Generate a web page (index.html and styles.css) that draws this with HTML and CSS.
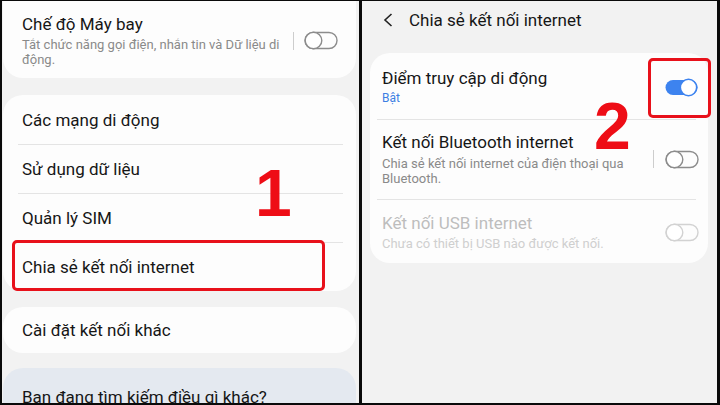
FILE: index.html
```html
<!DOCTYPE html>
<html lang="vi">
<head>
<meta charset="utf-8">
<link rel="stylesheet" href="styles.css">
</head>
<body>
<div class="screen">
  <section class="panel left">
    <div class="card first">
      <div class="row-toggle">
        <div class="texts airplane">
          <div class="title">Chế độ Máy bay</div>
          <div class="sub">Tắt chức năng gọi điện, nhắn tin và Dữ liệu di động.</div>
        </div>
        <span class="vsep"></span>
        <svg class="switch" width="34" height="19" viewBox="0 0 34 19"><rect x="1" y="1.5" width="32" height="16" rx="8" fill="none" stroke="#8c8c8c" stroke-width="1.4"/><circle cx="9.5" cy="9.5" r="8.3" fill="#fff" stroke="#8c8c8c" stroke-width="1.4"/></svg>
      </div>
    </div>

    <div class="card list">
      <div class="item">Các mạng di động</div>
      <div class="sep"></div>
      <div class="item">Sử dụng dữ liệu</div>
      <div class="sep"></div>
      <div class="item">Quản lý SIM</div>
      <div class="sep"></div>
      <div class="item">Chia sẻ kết nối internet
        <span class="mark mark1"></span>
      </div>
      <span class="num num1">1</span>
    </div>

    <div class="card single">
      <div class="item">Cài đặt kết nối khác</div>
    </div>

    <div class="card search">
      <div class="item">Bạn đang tìm kiếm điều gì khác?</div>
    </div>
  </section>

  <section class="panel right">
    <header class="head">
      <svg class="back" width="11" height="14" viewBox="0 0 11 14"><polyline points="8.5,1 2,7 8.5,13" fill="none" stroke="#222" stroke-width="1.6"/></svg>
      <span class="head-title">Chia sẻ kết nối internet</span>
    </header>

    <div class="card rcard">
      <div class="rrow r1">
        <div class="texts">
          <div class="title">Điểm truy cập di động</div>
          <div class="state">Bật</div>
        </div>
        <svg class="switch" width="34" height="19" viewBox="0 0 34 19"><rect x="0.5" y="2" width="32" height="15" rx="7.5" fill="#3d83ef"/><circle cx="23.5" cy="9.5" r="8.2" fill="#fff" stroke="#3d83ef" stroke-width="1.6"/></svg>
        <span class="mark mark2"></span>
      </div>
      <div class="sep rsep"></div>
      <div class="rrow r2">
        <div class="texts bt">
          <div class="title">Kết nối Bluetooth internet</div>
          <div class="sub">Chia sẻ kết nối internet của điện thoại qua Bluetooth.</div>
        </div>
        <span class="vsep"></span>
        <svg class="switch" width="34" height="19" viewBox="0 0 34 19"><rect x="1" y="1.5" width="32" height="16" rx="8" fill="none" stroke="#8c8c8c" stroke-width="1.4"/><circle cx="9.5" cy="9.5" r="8.3" fill="#fff" stroke="#8c8c8c" stroke-width="1.4"/></svg>
      </div>
      <div class="sep rsep"></div>
      <div class="rrow r3">
        <div class="texts">
          <div class="title dim">Kết nối USB internet</div>
          <div class="sub dim2">Chưa có thiết bị USB nào được kết nối.</div>
        </div>
        <svg class="switch" width="34" height="19" viewBox="0 0 34 19"><rect x="1" y="1.5" width="32" height="16" rx="8" fill="none" stroke="#d2d2d2" stroke-width="1.4"/><circle cx="9.5" cy="9.5" r="8.3" fill="#fff" stroke="#d2d2d2" stroke-width="1.4"/></svg>
      </div>
      <span class="num num2">2</span>
    </div>
  </section>
</div>
</body>
</html>
```

FILE: styles.css
```css
* { box-sizing: border-box; }
html, body {
  margin: 0;
  padding: 0;
  width: 720px;
  height: 405px;
  overflow: hidden;
  background: #0a0a0a;
}
body {
  font-family: Roboto, "Noto Sans", sans-serif;
  color: #141414;
}
.screen {
  display: grid;
  grid-template-columns: 357px 355px;
  column-gap: 3px;
  padding: 1px 3px 2px 2px;
  height: 405px;
}
.panel {
  background: #f2f2f2;
  overflow: hidden;
  position: relative;
  display: flex;
  flex-direction: column;
}
.left { padding: 0 3px 0 1px; }

.card {
  background: #fdfdfd;
  border-radius: 20px;
  position: relative;
}
.title {
  font-size: 17px;
  line-height: 20px;
  color: #161616;
}
.sub {
  font-size: 13px;
  line-height: 15px;
  color: #8a8a8a;
  margin-top: 3px;
}

.first {
  margin-top: -20px;
  padding: 33px 18px 11px 19px;
}
.row-toggle {
  display: flex;
  align-items: center;
}
.texts { flex: 1; min-width: 0; }
.airplane { flex: none; width: 261px; }
.vsep {
  flex: none;
  display: block;
  width: 1px;
  height: 18px;
  background: #cdcdcd;
  margin: 0 10px;
}
.switch { display: block; flex: none; }

.list {
  margin-top: 17px;
  padding-top: 1px;
}
.item {
  height: 48px;
  display: flex;
  align-items: center;
  padding-left: 19px;
  font-size: 17px;
  color: #161616;
  position: relative;
}
.sep {
  height: 1px;
  background: #e4e4e4;
  margin: 0 13px 0 15px;
}
.single {
  margin-top: 16px;
}
.single .item { height: 46px; }
.search {
  margin-top: 15px;
  background: #e4e9f0;
  flex: 1;
  padding-top: 19px;
  border-radius: 20px 20px 0 0;
}
.search .item { height: 20px; align-items: flex-start; line-height: 20px; }

.mark {
  position: absolute;
  border: 3px solid #e8111b;
  border-radius: 5px;
}
.mark1 {
  left: 9px;
  top: -3px;
  width: 313px;
  height: 51px;
}
.num {
  position: absolute;
  font-family: "Liberation Sans", Arial, sans-serif;
  font-weight: 700;
  font-size: 66px;
  line-height: 66px;
  color: #ee0d16;
}
.num1 { left: 252px; top: 65px; }

/* right */
.right { padding: 9px 9px 0 8px; }
.head {
  display: flex;
  align-items: center;
  height: 20px;
  padding-left: 13px;
}
.back { display: block; margin-right: 15px; }
.head-title { font-size: 17px; line-height: 20px; color: #161616; }

.rcard {
  margin-top: 23px;
  padding: 0 9px 0 12px;
}
.rrow {
  display: flex;
  align-items: center;
  position: relative;
}
.r1 { padding: 15px 0 13px; }
.r2 { padding: 12px 0 13px; }
.r3 { padding: 13px 0 12px; }
.state {
  font-size: 12px;
  line-height: 15px;
  color: #3c7fe3;
  margin-top: 3px;
}
.bt { flex: none; width: 259px; }
.r2 .vsep { margin: 0 11px 0 12px; }
.r2 .sub { margin-top: 4px; }
.r3 .sub { margin-top: 3px; }
.rsep { margin: 0 3px 0 -5px; }
.dim { color: #bdbdbd; }
.dim2 { color: #cfcfcf; }
.mark2 {
  left: 266px;
  top: 5px;
  width: 63px;
  height: 60px;
}
.num2 { left: 224px; top: 40px; }
```
